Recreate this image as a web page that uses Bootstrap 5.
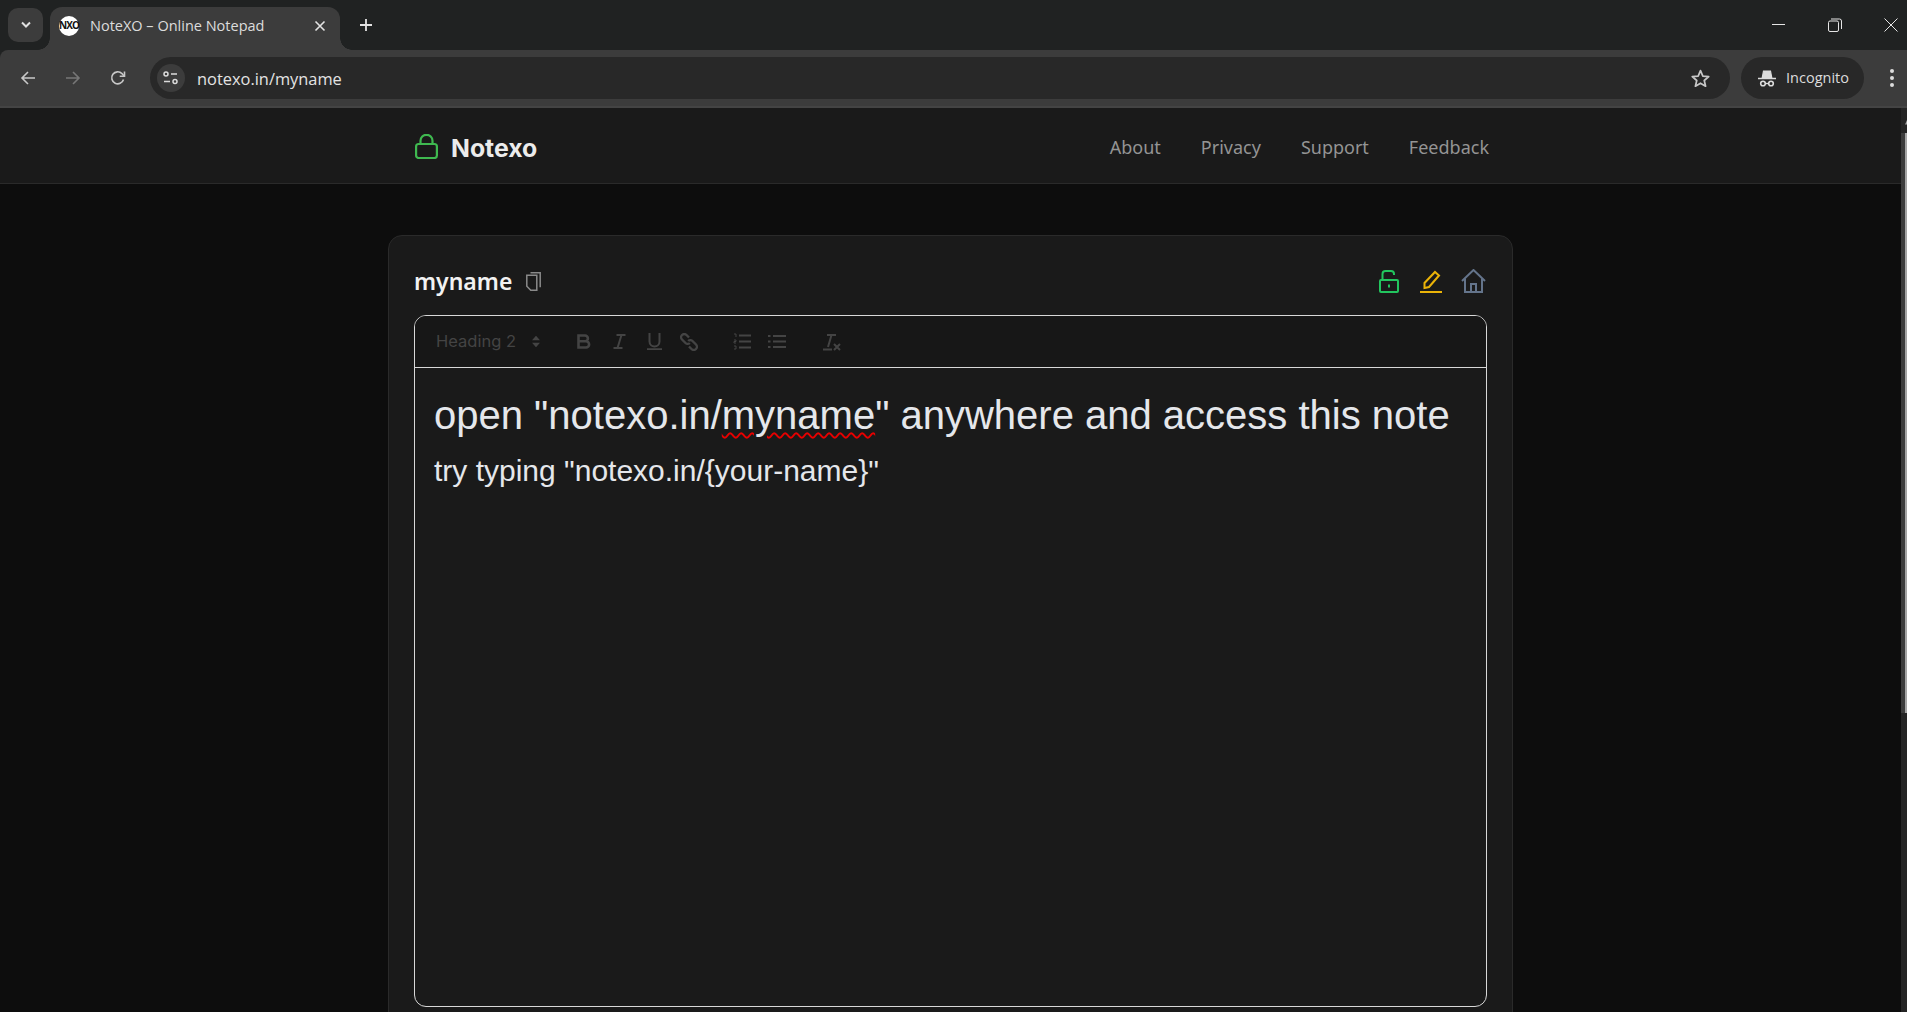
<!DOCTYPE html>
<html lang="en">
<head>
<meta charset="utf-8">
<title>NoteXO – Online Notepad</title>
<link href="https://cdn.jsdelivr.net/npm/bootstrap@5.3.0/dist/css/bootstrap.min.css" rel="stylesheet">
<style>
html,body{height:100%;overflow:hidden;background:#0d0d0d;font-family:Inter,"Noto Sans",sans-serif;}
.chrome-ui{font-family:"Open Sans","Noto Sans",sans-serif;background:#202222;}
.tabstrip{height:50px;padding-left:8px;}
.tab-switch{width:35px;height:34px;margin-top:8px;border-radius:10px;background:#3c3c3c;position:relative;z-index:1;}
.active-tab{width:290px;height:43px;margin-top:7px;margin-left:7px;background:#3c3c3c;border-radius:12px 12px 0 0;padding:0 14px 6px 9px;color:#dcdcdc;font-size:14.5px;position:relative;}
.active-tab::before,.active-tab::after{content:"";position:absolute;bottom:0;width:12px;height:12px;}
.active-tab::before{left:-12px;background:radial-gradient(circle at 0 0,transparent 11.5px,#3c3c3c 12px);}
.active-tab::after{right:-12px;background:radial-gradient(circle at 100% 0,transparent 11.5px,#3c3c3c 12px);}
.tab-fav{width:20px;height:20px;border-radius:50%;background:#fff;color:#111;font-size:10px;font-weight:700;letter-spacing:-1px;margin-right:11px;}
.tab-plus{margin:18px 0 0 19px;}
.win-btns{margin-right:-12px;}
.win-btn{width:56px;padding-top:18px;}
.toolbar-row{height:58px;background:#3c3c3c;border-bottom:2px solid #444;padding-left:5px;border-radius:8px 0 0 0;}
.nav-ico{width:45px;}
.omnibox{height:42px;background:#282828;border-radius:21px;margin-left:10px;padding:0 20.5px 0 7px;color:#e3e3e3;font-size:16.4px;flex:1;}
.url-text{padding-top:2px;}
.site-ico{width:28px;height:28px;background:#3c3c3c;border-radius:50%;margin-right:12px;}
.incog{height:42px;border-radius:21px;background:#282828;width:123px;margin-left:11px;padding-left:2px;color:#dcdcdc;font-size:14.5px;gap:10px;}
.dots{width:30px;margin-left:13px;}
.viewport{height:calc(100vh - 108px);}
.page-col{flex:1;min-width:0;}
.top-nav{height:76px;background:#1a1a1a;border-bottom:1px solid #2a2a2a;}
.nav-inner{width:1074px;margin-left:415px;}
.nav-lock{margin-top:1px;}
.brand-name{font-size:24.8px;font-weight:700;color:#ececec;margin-left:13px;line-height:1;padding-top:5px;}
.site-link{color:#949494;font-family:"Noto Sans",sans-serif;font-size:18px;text-decoration:none;margin-left:40px;padding-top:3px;}
.note-card{width:1125px;margin:51px 0 0 388px;background:#1a1a1a;border:1px solid #2a2a2a;border-radius:14px 14px 0 0;padding:0 25px;height:900px;}
.note-head{height:79px;padding-top:11px;}
.note-title{font-size:23px;font-weight:600;color:#f2f2f2;margin-right:14px;font-family:"Noto Sans",sans-serif;}
.head-set{margin-right:1px;}
.head-lock{margin-right:21px;}
.head-pen{margin-right:19px;}
.editor-box{height:692px;border:1px solid #d8d8d8;border-radius:12px;overflow:hidden;}
.editor-tools{height:52px;background:#171717;border-bottom:1px solid #d8d8d8;padding-left:21px;color:#444;}
.heading-pick{font-size:16.5px;color:#444;width:130.5px;}
.pick-arrows{margin-left:16px;}
.tool-btn{width:35px;display:flex;justify-content:center;align-items:center;}
.group-a{margin-right:18px;}
.group-b{margin-right:20px;}
.editor-text{padding:19px 19px;color:#e5e7eb;font-family:"Liberation Sans",Arial,sans-serif;}
.line-one{font-size:40px;line-height:56px;margin:0;font-weight:400;}
.line-two{font-size:30px;line-height:42px;margin:7px 0 0;font-weight:400;}
.spell{text-decoration:underline wavy #e80000 1.5px;text-underline-offset:3px;}
.scroll-col{width:6px;background:#242424;padding-top:12px;}
.scroll-arrow{display:block;margin-bottom:8px;}
.scroll-thumb{height:580px;background:#a5a5a5;border-left:4px solid #3c3c3c;}
</style>
</head>
<body>
<div class="chrome-ui">
  <div class="tabstrip d-flex align-items-start">
    <div class="tab-switch d-flex align-items-center justify-content-center">
      <svg width="12" height="8" viewBox="0 0 12 8" fill="none" stroke="#e0e0e0" stroke-width="2"><path d="M2 1.500l4 4 4-4"/></svg>
    </div>
    <div class="active-tab d-flex align-items-center">
      <span class="tab-fav d-flex align-items-center justify-content-center">NXO</span>
      <span class="flex-grow-1">NoteXO – Online Notepad</span>
      <svg width="12" height="12" viewBox="0 0 12 12" stroke="#e3e3e3" stroke-width="1.600"><path d="M1.500 1.500l9 9M10.500 1.500l-9 9"/></svg>
    </div>
    <svg class="tab-plus" width="14" height="14" viewBox="0 0 14 14" stroke="#e3e3e3" stroke-width="1.800"><path d="M7 1v12M1 7h12"/></svg>
    <div class="win-btns d-flex ms-auto">
      <div class="win-btn d-flex justify-content-center"><svg width="14" height="14" viewBox="0 0 14 14" stroke="#e6e6e6" stroke-width="1"><path d="M0 6.500h13"/></svg></div>
      <div class="win-btn d-flex justify-content-center"><svg width="14" height="14" viewBox="0 0 14 14" fill="none" stroke="#e6e6e6" stroke-width="1"><rect x=".5" y="3" width="10" height="10.500" rx="1.500"/><path d="M3 1h8.500a2 2 0 0 1 2 2v8"/></svg></div>
      <div class="win-btn d-flex justify-content-center"><svg width="14" height="14" viewBox="0 0 14 14" stroke="#e6e6e6" stroke-width="1"><path d="M.5.5l13 13M13.500.5l-13 13"/></svg></div>
    </div>
  </div>
  <div class="toolbar-row d-flex align-items-center">
    <div class="nav-ico d-flex justify-content-center"><svg width="16" height="16" viewBox="0 0 16 16" fill="none" stroke="#c8c8c8" stroke-width="1.600"><path d="M15 8H2M8 2L2 8l6 6"/></svg></div>
    <div class="nav-ico d-flex justify-content-center"><svg width="16" height="16" viewBox="0 0 16 16" fill="none" stroke="#777" stroke-width="1.600"><path d="M1 8h13M8 2l6 6-6 6"/></svg></div>
    <div class="nav-ico d-flex justify-content-center"><svg width="16" height="16" viewBox="0 0 16 16" fill="none" stroke="#c8c8c8" stroke-width="1.600"><path d="M13.500 9.500A6 6 0 1 1 12 3.600L14 6"/><path d="M14.500 1.500V6.300H9.700"/></svg></div>
    <div class="omnibox d-flex align-items-center">
      <span class="site-ico d-flex align-items-center justify-content-center"><svg width="16" height="14" viewBox="0 0 16 14" fill="none" stroke="#dcdcdc" stroke-width="1.500"><circle cx="3" cy="3" r="2"/><path d="M8 3h6M1 10.500h6"/><circle cx="12" cy="10.500" r="2"/></svg></span>
      <span class="url-text">notexo.in/myname</span>
      <svg class="ms-auto" width="19" height="18" viewBox="0 0 24 23" fill="none" stroke="#c8c8c8" stroke-width="2.200" stroke-linejoin="round"><path d="M12 2l3 7 7.500.7-5.700 5 1.700 7.300L12 18.200 5.500 22l1.700-7.300-5.700-5L9 9z"/></svg>
    </div>
    <div class="incog d-flex align-items-center justify-content-center">
      <svg width="18" height="17" viewBox="0 0 18 17" fill="#dcdcdc" stroke="#dcdcdc"><path d="M5.500 1h7l1.200 6.500H4.300z" stroke-width="1.200"/><path d="M0 8.500h18" stroke-width="1.500"/><circle cx="5" cy="13.500" r="2.300" fill="none" stroke-width="1.600"/><circle cx="13" cy="13.500" r="2.300" fill="none" stroke-width="1.600"/><path d="M7.300 13.500h3.400" stroke-width="1.400"/></svg>
      <span>Incognito</span>
    </div>
    <div class="dots d-flex justify-content-center"><svg width="4" height="18" viewBox="0 0 4 18" fill="#dcdcdc"><circle cx="2" cy="2" r="2"/><circle cx="2" cy="9" r="2"/><circle cx="2" cy="16" r="2"/></svg></div>
  </div>
</div>
<div class="viewport d-flex">
  <div class="page-col">
    <nav class="top-nav d-flex align-items-center">
      <div class="nav-inner d-flex align-items-center">
        <svg class="nav-lock" width="23" height="25" viewBox="0 0 23 25" fill="none" stroke="#3fb950" stroke-width="2.200"><rect x="1.100" y="10" width="20.800" height="14" rx="2.500"/><path d="M5.500 10V6.800a6 6 0 0 1 12 0V10"/></svg>
        <span class="brand-name">Notexo</span>
        <div class="ms-auto d-flex">
          <a class="site-link" href="#">About</a>
          <a class="site-link" href="#">Privacy</a>
          <a class="site-link" href="#">Support</a>
          <a class="site-link" href="#">Feedback</a>
        </div>
      </div>
    </nav>
    <main class="note-card">
      <div class="note-head d-flex align-items-center">
        <span class="note-title">myname</span>
        <svg width="15" height="19" viewBox="0 0 15 19" fill="none" stroke="#8a8a8a" stroke-width="1.500"><path d="M4.500 .8h9.700v14.500"/><path d="M.8 3.300h10v15h-6l-4-4z"/></svg>
        <div class="head-set ms-auto d-flex align-items-center">
          <svg class="head-lock" width="20" height="23" viewBox="0 0 20 23" fill="none" stroke="#22c55e" stroke-width="2"><rect x="1" y="10" width="18" height="12" rx="1"/><path d="M3.500 10V4a3 3 0 0 1 3-3h5.500a3 3 0 0 1 3 3v1"/><path d="M10 14.500v3"/></svg>
          <svg class="head-pen" width="22" height="23" viewBox="0 0 22 23" fill="none" stroke="#eab308" stroke-width="2"><path d="M4.500 18v-5L15 2l4 3.500L9 17z"/><path d="M0 22h22"/></svg>
          <svg width="25" height="24" viewBox="0 0 25 24" fill="none" stroke="#64748b" stroke-width="2"><path d="M1 12L12.500 1 24 12"/><path d="M4 9.500V23h17V9.500"/><path d="M10 23v-8h5v8"/></svg>
        </div>
      </div>
      <div class="editor-box">
        <div class="editor-tools d-flex align-items-center">
          <div class="heading-pick d-flex align-items-center">
            <span>Heading 2</span>
            <svg class="pick-arrows" width="8" height="13" viewBox="0 0 9 13" fill="#444"><path d="M4.500 0L9 5H0zM4.500 13L0 8h9z"/></svg>
          </div>
          <div class="tool-btn"><svg width="14" height="15" viewBox="0 0 14 15" fill="none" stroke="#444" stroke-width="2.600"><path d="M1.500 1.500h6.500a2.900 2.900 0 0 1 0 5.800H1.500zM1.500 7.300h7.500a3 3 0 0 1 0 6.200H1.500z"/></svg></div>
          <div class="tool-btn"><svg width="13" height="15" viewBox="0 0 13 15" fill="none" stroke="#444" stroke-width="2"><path d="M3.500 1h9M.5 14h9M8.500 1L4.500 14"/></svg></div>
          <div class="tool-btn"><svg width="15" height="17" viewBox="0 0 15 17" fill="none" stroke="#444" stroke-width="2"><path d="M2.500 0v8.500a5 5 0 0 0 10 0V0"/><path d="M0 16.300h15"/></svg></div>
          <div class="tool-btn group-a"><svg width="18" height="18" viewBox="0 0 18 18" fill="none" stroke="#444" stroke-width="2.400"><path d="M9 4.500L6.500 2a3 3 0 0 0-4.500 4.500L5.500 10a3 3 0 0 0 4.300 0"/><path d="M9 13.500l2.500 2.500a3 3 0 0 0 4.500-4.500L12.500 8a3 3 0 0 0-4.300 0"/></svg></div>
          <div class="tool-btn"><svg width="18" height="17" viewBox="0 0 18 17" fill="none" stroke="#444" stroke-width="2"><path d="M6 2.500h12M6 8.500h12M6 14.500h12"/><path d="M1 1h2v3M1 7h2v1.500H1V10h2M1 13h2v3H1" stroke-width="1"/></svg></div>
          <div class="tool-btn group-b"><svg width="18" height="15" viewBox="0 0 18 15" fill="none" stroke="#444" stroke-width="2"><path d="M5 2h13M5 7.500h13M5 13h13M0 2h2.500M0 7.500h2.500M0 13h2.500"/></svg></div>
          <div class="tool-btn"><svg width="18" height="18" viewBox="0 0 18 18" fill="none" stroke="#444" stroke-width="2"><path d="M4 2h9M8.500 2L5 14M0 16.500h9M11 11l6 6M17 11l-6 6"/></svg></div>
        </div>
        <div class="editor-text">
          <h1 class="line-one">open "notexo.in/<span class="spell">myname</span>" anywhere and access this note</h1>
          <h2 class="line-two">try typing "notexo.in/{your-name}"</h2>
        </div>
      </div>
    </main>
  </div>
  <div class="scroll-col"><svg class="scroll-arrow" width="6" height="5" viewBox="0 0 6 5" fill="#a5a5a5"><path d="M6 0L4 4.500h2z"/></svg><div class="scroll-thumb"></div></div>
</div>
</body>
</html>
